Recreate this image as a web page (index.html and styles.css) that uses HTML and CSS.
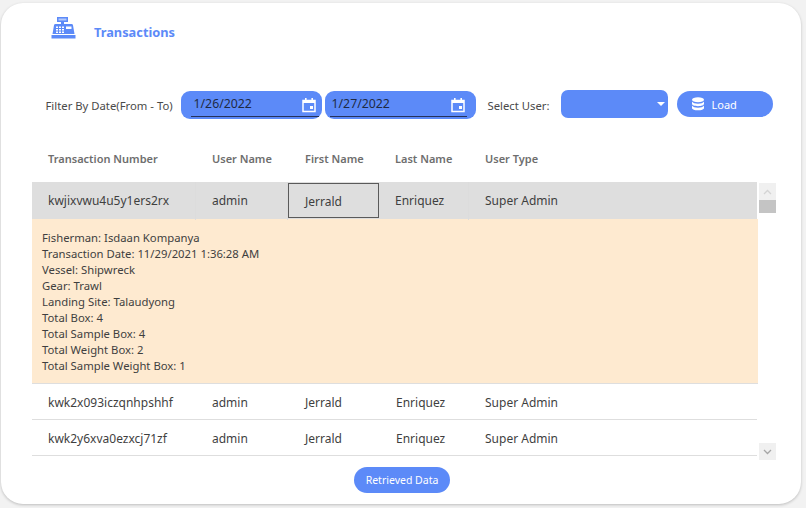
FILE: index.html
```html
<!DOCTYPE html>
<html lang="en">
<head>
<meta charset="utf-8">
<title>Transactions</title>
<link rel="stylesheet" href="styles.css">
</head>
<body>
<main class="card">
  <header class="title-bar">
    <svg class="register-icon" width="26" height="22" viewBox="0 0 26 22" aria-hidden="true">
      <path fill="#5c8af8" d="M6 0h11v5h-4v2h7.500a1.500 1.500 0 0 1 1.500 1.300L23.500 17H1.500L3 8.300A1.500 1.500 0 0 1 4.500 7H10V5H6z"/>
      <rect x="0.500" y="18" width="24" height="3.500" fill="#5c8af8"/>
      <rect x="7.500" y="1.500" width="8" height="2" fill="#fff" opacity=".55"/>
      <path fill="#fff" d="M5 9.500h2v1.600H5zM8 9.500h2v1.600H8zM11 9.500h2v1.600h-2zM5 12h2v1.600H5zM8 12h2v1.600H8zM11 12h2v1.600h-2zM5 14.400h2V16H5zM8 14.400h2V16H8zM11 14.400h2V16h-2zM15 9.500h5.500v2.500H15z"/>
    </svg>
    <h1 class="title">Transactions</h1>
  </header>

  <section class="filters">
    <span class="filter-label">Filter By Date(From - To)</span>
    <div class="date-field date-from">
      <span class="date-value">1/26/2022</span>
      <svg class="calendar" width="16" height="16" viewBox="0 0 16 16" aria-hidden="true">
        <path fill="none" stroke="#fff" stroke-width="1.500" d="M2 3.500h12v11H2z"/>
        <path fill="#fff" d="M2 3h12v3H2zM4 1h1.600v3H4zM10.400 1H12v3h-1.600zM9 9h3v3H9z"/>
      </svg>
    </div>
    <div class="date-field date-to">
      <span class="date-value">1/27/2022</span>
      <svg class="calendar" width="16" height="16" viewBox="0 0 16 16" aria-hidden="true">
        <path fill="none" stroke="#fff" stroke-width="1.500" d="M2 3.500h12v11H2z"/>
        <path fill="#fff" d="M2 3h12v3H2zM4 1h1.600v3H4zM10.400 1H12v3h-1.600zM9 9h3v3H9z"/>
      </svg>
    </div>
    <span class="user-label">Select User:</span>
    <div class="user-select"><span class="caret"></span></div>
    <button class="load-button" type="button">
      <svg width="14" height="14" viewBox="0 0 14 14" aria-hidden="true">
        <ellipse cx="7" cy="2.800" rx="6" ry="2.500" fill="#fff"/>
        <path fill="#fff" d="M1 4.500c1 1.600 3.300 2.200 6 2.200s5-.6 6-2.200v2.300c0 1.400-2.700 2.400-6 2.400s-6-1-6-2.400z"/>
        <path fill="#fff" d="M1 8.600c1 1.600 3.300 2.200 6 2.200s5-.6 6-2.200v2.300c0 1.400-2.700 2.400-6 2.400s-6-1-6-2.400z"/>
      </svg>
      <span>Load</span>
    </button>
  </section>

  <section class="table-area">
    <div class="row head-row">
      <div class="cell">Transaction Number</div>
      <div class="cell">User Name</div>
      <div class="cell">First Name</div>
      <div class="cell">Last Name</div>
      <div class="cell">User Type</div>
    </div>
    <div class="table-body">
      <div class="rows">
        <div class="row selected-row">
          <div class="cell">kwjixvwu4u5y1ers2rx</div>
          <div class="cell">admin</div>
          <div class="cell current-cell">Jerrald</div>
          <div class="cell">Enriquez</div>
          <div class="cell">Super Admin</div>
        </div>
        <div class="details">
          <p>Fisherman: Isdaan Kompanya</p>
          <p>Transaction Date: 11/29/2021 1:36:28 AM</p>
          <p>Vessel: Shipwreck</p>
          <p>Gear: Trawl</p>
          <p>Landing Site: Talaudyong</p>
          <p>Total Box: 4</p>
          <p>Total Sample Box: 4</p>
          <p>Total Weight Box: 2</p>
          <p>Total Sample Weight Box: 1</p>
        </div>
        <div class="row data-row">
          <div class="cell">kwk2x093iczqnhpshhf</div>
          <div class="cell">admin</div>
          <div class="cell">Jerrald</div>
          <div class="cell">Enriquez</div>
          <div class="cell">Super Admin</div>
        </div>
        <div class="row data-row">
          <div class="cell">kwk2y6xva0ezxcj71zf</div>
          <div class="cell">admin</div>
          <div class="cell">Jerrald</div>
          <div class="cell">Enriquez</div>
          <div class="cell">Super Admin</div>
        </div>
      </div>
      <div class="scrollbar">
        <div class="scroll-btn">
          <svg width="9" height="6" viewBox="0 0 9 6" aria-hidden="true"><path d="M1 5l3.500-3.500L8 5" fill="none" stroke="#d4d4d4" stroke-width="1.300"/></svg>
        </div>
        <div class="scroll-thumb"></div>
        <div class="scroll-track"></div>
        <div class="scroll-btn">
          <svg width="9" height="6" viewBox="0 0 9 6" aria-hidden="true"><path d="M1 1l3.500 3.500L8 1" fill="none" stroke="#a6a6a6" stroke-width="1.300"/></svg>
        </div>
      </div>
    </div>
  </section>

  <footer class="footer">
    <button class="retrieved-button" type="button">Retrieved Data</button>
  </footer>
</main>
</body>
</html>
```

FILE: styles.css
```css
* { box-sizing: border-box; }

html, body {
  margin: 0;
  height: 100%;
}

body {
  width: 806px;
  height: 508px;
  overflow: hidden;
  background: #f2f2f2;
  padding: 3px 5px 4px 1px;
  font-family: "Noto Sans", "Open Sans", sans-serif;
  font-size: 12px;
  color: #3f3f3f;
}

.card {
  width: 800px;
  height: 501px;
  background: #fff;
  border-radius: 22px;
  box-shadow: 0 1px 3px rgba(0, 0, 0, .22);
  display: flex;
  flex-direction: column;
}

.title-bar {
  height: 44px;
  padding: 14px 0 0 50px;
  display: flex;
  align-items: flex-start;
  gap: 17px;
}

.title {
  margin: 6px 0 0;
  font-size: 12.800px;
  line-height: 18px;
  font-weight: 700;
  color: #5c8af8;
}

.filters {
  margin-top: 44px;
  height: 28px;
  padding-left: 44.500px;
  display: flex;
  align-items: flex-start;
}

.filter-label, .user-label {
  font-size: 11.300px;
  line-height: 16px;
  margin-top: 7px;
  color: #4a4a4a;
  white-space: nowrap;
}

.filter-label { width: 135px; }

.date-field {
  position: relative;
  height: 28px;
  background: #5c8af8;
  border-radius: 9px;
  display: flex;
  justify-content: space-between;
  color: #1f2a44;
  padding: 0 5px 0 13px;
}

.date-field::after {
  content: "";
  position: absolute;
  left: 10px;
  right: 3px;
  bottom: 2px;
  height: 1px;
  background: #26325a;
}

.date-from { width: 141px; }
.date-to { width: 151px; margin-left: 3px; padding-left: 7px; }
.date-to::after { left: 5px; right: 9px; }

.date-value {
  font-size: 12.300px;
  line-height: 17px;
  margin-top: 4px;
}

.calendar { margin-top: 6px; }
.date-to .calendar { margin-right: 5px; }

.user-label {
  margin-left: 12px;
  width: 73px;
}

.user-select {
  position: relative;
  width: 107px;
  height: 28px;
  margin-top: -1px;
  background: #5c8af8;
  border-radius: 7px;
}

.caret {
  position: absolute;
  top: 12px;
  right: 3px;
  border-left: 4px solid transparent;
  border-right: 4px solid transparent;
  border-top: 4px solid #fff;
}

.load-button {
  margin-left: 9px;
  width: 96px;
  height: 26px;
  padding: 0 0 0 14px;
  border: 0;
  border-radius: 13px;
  background: #5c8af8;
  color: #fff;
  font: inherit;
  font-size: 11px;
  display: flex;
  align-items: center;
  gap: 7px;
}

.table-area {
  margin: 0 0 0 31px;
}

.row {
  display: grid;
  grid-template-columns: 164px 92px 91px 90px 101px 187px;
  width: 725px;
}

.cell {
  padding-left: 16px;
  white-space: nowrap;
}

.head-row {
  height: 37px;
  margin-top: 13px;
  padding-top: 19px;
  font-size: 11px;
  line-height: 16px;
  font-weight: 600;
  color: #6e6e6e;
}

.head-row .cell:nth-child(3) { padding-left: 17px; }

.table-body {
  display: flex;
  margin-top: 13px;
  height: 278px;
}

.rows { width: 726px; }

.selected-row {
  height: 37px;
  background: #dedede;
  line-height: 38px;
}

.selected-row .cell { border-right: 1px solid #dcdcdc; }
.selected-row .cell:last-child { border-right: 0; }

.selected-row .current-cell {
  border: 1px solid #5a5a5a;
  height: 35px;
  margin-top: 1px;
  line-height: 35px;
}

.data-row .cell:nth-child(3) { padding-left: 17px; }
.data-row .cell:nth-child(4) { padding-left: 17px; }
.selected-row .cell:nth-child(4) { padding-left: 16px; }

.details {
  height: 165px;
  padding: 11px 0 0 10px;
  background: #feead0;
  border-bottom: 1px solid #dedede;
  font-size: 11.300px;
  line-height: 16px;
}

.details p { margin: 0; white-space: nowrap; }

.data-row {
  height: 36px;
  line-height: 37px;
  border-bottom: 1px solid #dedede;
}

.scrollbar {
  width: 17px;
  margin-left: 1px;
  margin-top: 1px;
  display: flex;
  flex-direction: column;
  background: #fff;
}

.scroll-btn {
  height: 17px;
  background: #f0f0f0;
  display: flex;
  align-items: center;
  justify-content: center;
}

.scroll-thumb {
  height: 13px;
  background: #c4c4c4;
}

.scroll-track { flex: 1; }

.footer {
  display: flex;
  justify-content: center;
  margin-top: 7px;
  padding-left: 2px;
}

.retrieved-button {
  width: 96px;
  height: 26px;
  border: 0;
  border-radius: 13px;
  background: #5c8af8;
  color: #fff;
  padding: 0;
  font: inherit;
  font-size: 10.500px;
}
```
